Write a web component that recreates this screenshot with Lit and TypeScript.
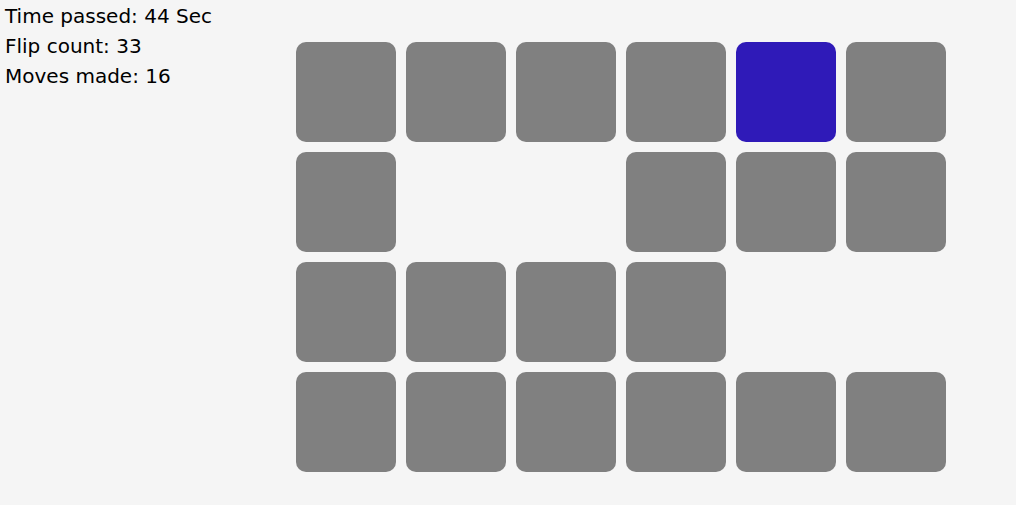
import { LitElement, html, css } from "lit";
import { customElement, property, state } from "lit/decorators.js";
import { classMap } from "lit/directives/class-map.js";

type CardState = "hidden" | "open" | "matched";

@customElement("memory-card")
class MemoryCard extends LitElement {
  @property() status: CardState = "hidden";
  @property() label = "";

  static styles = css`
    :host {
      display: block;
      aspect-ratio: 1;
    }
    .card {
      display: block;
      width: 100%;
      height: 100%;
      padding: 0;
      border: 0;
      border-radius: 10px;
      background: #808080;
      cursor: pointer;
    }
    .open {
      background: #2f1ab8;
    }
    .matched {
      visibility: hidden;
    }
  `;

  render() {
    return html`<button
      type="button"
      class=${classMap({
        card: true,
        open: this.status === "open",
        matched: this.status === "matched",
      })}
      aria-label=${this.label}
    ></button>`;
  }
}

@customElement("app-root")
class AppRoot extends LitElement {
  @state() private seconds = 44;
  @state() private flips = 33;
  @state() private moves = 16;

  // h = face down, o = face up, m = already matched and removed
  @state() private rows = ["hhhhoh", "hmmhhh", "hhhhmm", "hhhhhh"];

  static styles = css`
    :host {
      display: block;
      min-height: 100vh;
      background: #f5f5f5;
      color: #000;
      font-family: "DejaVu Sans", sans-serif;
      font-size: 20px;
      line-height: 30px;
    }
    .game {
      display: flex;
      justify-content: space-between;
      gap: 20px;
      padding-right: 70px;
    }
    .stats {
      padding: 1px 5px;
      white-space: nowrap;
    }
    .stats p {
      margin: 0;
    }
    .board {
      flex: 0 1 650px;
      display: grid;
      grid-template-columns: repeat(6, 1fr);
      align-content: start;
      gap: 10px;
      padding: 42px 0 32px;
    }
  `;

  render() {
    const names: Record<string, CardState> = { h: "hidden", o: "open", m: "matched" };
    const cards = this.rows.join("").split("");
    return html`
      <main class="game">
        <section class="stats">
          <p>Time passed: ${this.seconds} Sec</p>
          <p>Flip count: ${this.flips}</p>
          <p>Moves made: ${this.moves}</p>
        </section>
        <section class="board">
          ${cards.map(
            (c, i) => html`<memory-card .status=${names[c]} .label=${`Card ${i + 1}`}></memory-card>`
          )}
        </section>
      </main>
    `;
  }
}
